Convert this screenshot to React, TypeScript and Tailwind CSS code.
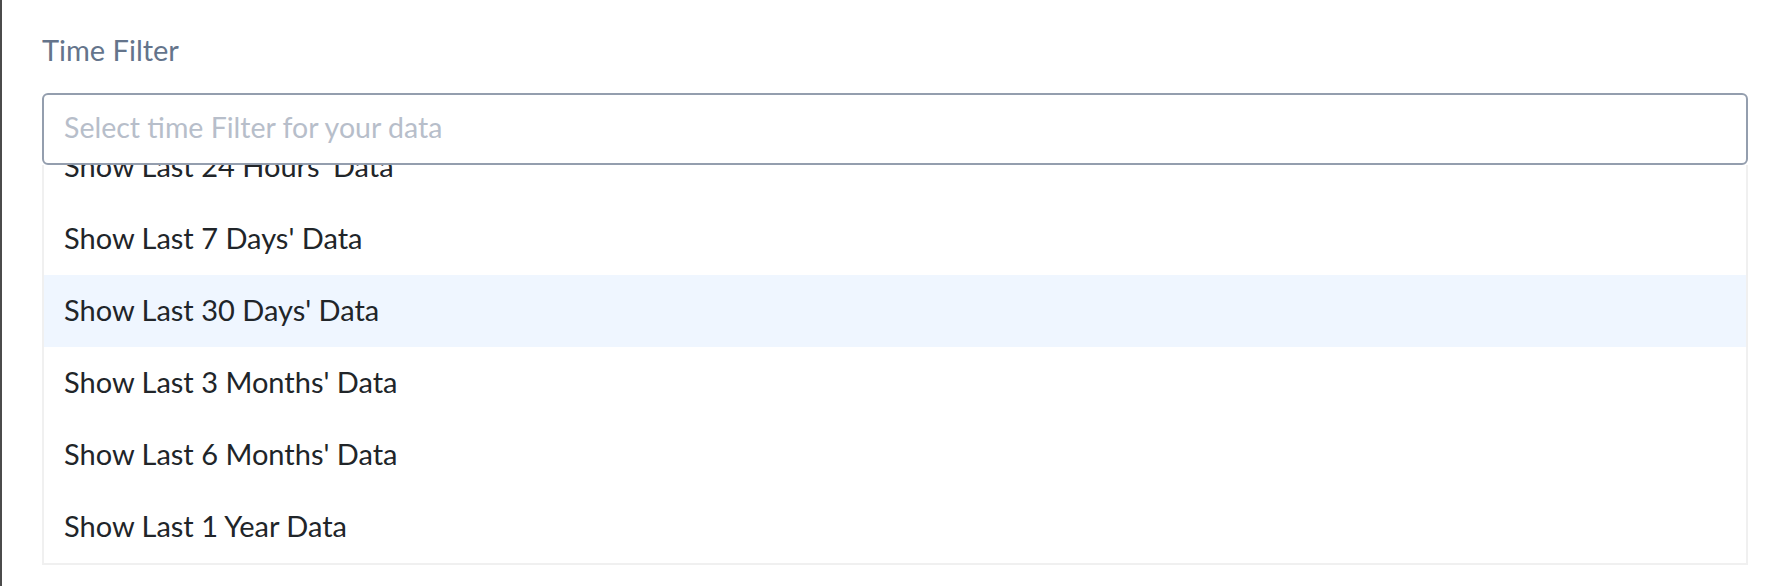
import { useCallback } from 'react';

const options = [
  "Show Last 24 Hours' Data",
  "Show Last 7 Days' Data",
  "Show Last 30 Days' Data",
  "Show Last 3 Months' Data",
  "Show Last 6 Months' Data",
  'Show Last 1 Year Data',
];

export default function App() {
  // list is scrolled a bit, first option half hidden under the input
  const listRef = useCallback((el: HTMLDivElement | null) => {
    if (el) el.scrollTop = 37;
  }, []);

  return (
    <div
      className="min-h-[586px] bg-white border-l-2 border-[#4b4b4b] pl-[40px] pr-[28px] pt-[30px]"
      style={{ fontFamily: 'Lato, "Open Sans", sans-serif' }}
    >
      {/* Label */}
      <label className="block text-[29px] leading-[40px] text-[#64748b]">Time Filter</label>

      {/* Select field */}
      <div className="mt-[23px] relative">
        <input
          type="text"
          readOnly
          placeholder="Select time Filter for your data"
          className="block w-full h-[72px] rounded-[6px] border-2 border-[#949eae] bg-white px-[20px] pb-[4px] text-[28.5px] text-[#212529] placeholder:text-[#b7beca] outline-none"
        />

        {/* Options */}
        <div
          ref={listRef}
          className="h-[400px] overflow-hidden border-2 border-t-0 border-[#f0f0f0] bg-white"
        >
          {options.map((opt, i) => (
            <div
              key={opt}
              className={`h-[72px] flex items-center px-[20px] pb-[3px] text-[29px] text-[#212529] ${
                i === 2 ? 'bg-[#eff6ff]' : ''
              }`}
            >
              {opt}
            </div>
          ))}
        </div>
      </div>
    </div>
  );
}
